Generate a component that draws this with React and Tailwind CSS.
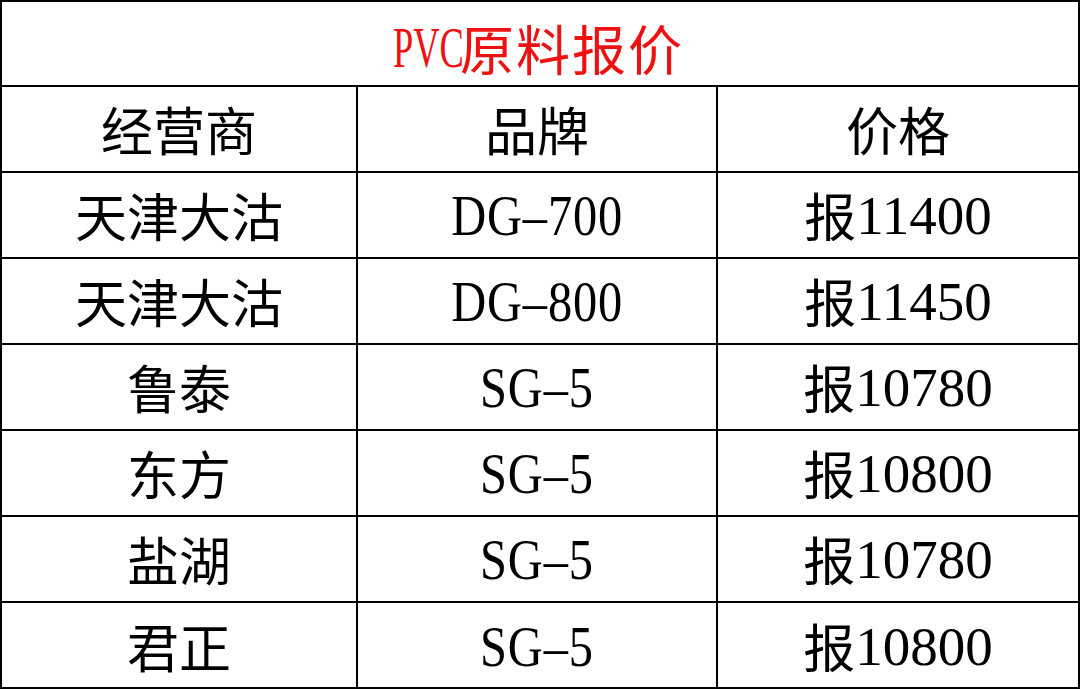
const rows = [
  ['天津大沽', 'DG-700', '11400'],
  ['天津大沽', 'DG-800', '11450'],
  ['鲁泰', 'SG-5', '10780'],
  ['东方', 'SG-5', '10800'],
  ['盐湖', 'SG-5', '10780'],
  ['君正', 'SG-5', '10800'],
]

const cjk = "font-['Noto_Sans_CJK_SC',sans-serif]"
const serif = "font-['Liberation_Serif','Noto_Sans_CJK_SC',serif]"

function Cell({ children, last }) {
  return (
    <div
      className={`flex items-center justify-center text-[52px] leading-none text-black ${
        last ? '' : 'border-r-2 border-black'
      }`}
    >
      {children}
    </div>
  )
}

export default function App() {
  return (
    <div className="box-border flex h-[689px] w-[1080px] flex-col border-2 border-black bg-white">
      <div className="flex h-[85px] shrink-0 items-center justify-center border-b-2 border-black pt-[8px] text-[54px] leading-none text-[#ee1111]">
        <span className="flex w-[64px] justify-center">
          <span className={`${serif} inline-block scale-x-[0.65] text-[56px]`}>PVC</span>
        </span>
        <span className={`${cjk} tracking-[2px]`}>原料报价</span>
      </div>
      <div className={`grid h-[86px] shrink-0 grid-cols-[356px_360px_1fr] border-b-2 border-black ${cjk}`}>
        <Cell>经营商</Cell>
        <Cell>品牌</Cell>
        <Cell last>价格</Cell>
      </div>
      {rows.map((row, i) => (
        <div
          key={i}
          className={`grid h-[86px] shrink-0 grid-cols-[356px_360px_1fr] ${
            i < rows.length - 1 ? 'border-b-2 border-black' : 'grow'
          }`}
        >
          <Cell>
            <span className={cjk}>{row[0]}</span>
          </Cell>
          <Cell>
            <span className={`${serif} inline-block scale-x-[0.85] text-[57px] tracking-[1px]`}>
              {row[1].replace('-', '\u2013')}
            </span>
          </Cell>
          <Cell last>
            <span className={cjk}>报</span>
            <span className={`${serif} text-[55px]`}>{row[2]}</span>
          </Cell>
        </div>
      ))}
    </div>
  )
}
